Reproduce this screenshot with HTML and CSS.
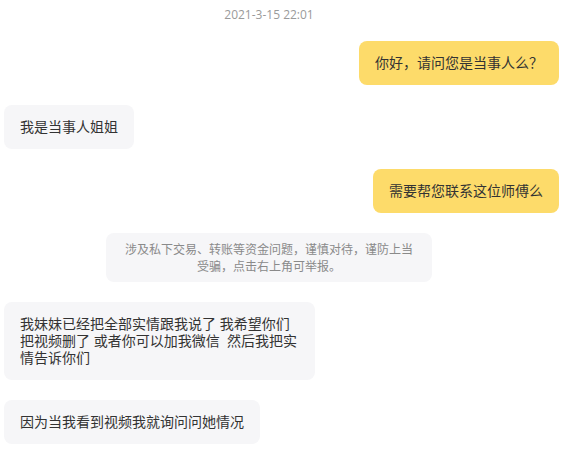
FILE: index.html
```html
<!DOCTYPE html>
<html lang="zh-CN">
<head>
    <meta charset="UTF-8">
    <meta name="viewport" content="width=device-width, initial-scale=1.0">
    <title>聊天记录</title>
    <link rel="stylesheet" href="styles.css">
</head>
<body>
    <div class="chat">
        <div class="time">2021-3-15 22:01</div>

        <div class="msg msg-right">
            <div class="bubble bubble-mine">你好，请问您是当事人么？</div>
        </div>

        <div class="msg msg-left">
            <div class="bubble">我是当事人姐姐</div>
        </div>

        <div class="msg msg-right">
            <div class="bubble bubble-mine">需要帮您联系这位师傅么</div>
        </div>

        <div class="notice-row">
            <div class="notice">涉及私下交易、转账等资金问题，谨慎对待，谨防上当受骗，点击右上角可举报。</div>
        </div>

        <div class="msg msg-left">
            <div class="bubble">我妹妹已经把全部实情跟我说了 我希望你们把视频删了 或者你可以加我微信&nbsp; 然后我把实情告诉你们</div>
        </div>

        <div class="msg msg-left">
            <div class="bubble">因为当我看到视频我就询问问她情况</div>
        </div>
    </div>
</body>
</html>
```

FILE: styles.css
```css
body {
    margin: 0;
    background: #fff;
    font-family: "Open Sans", "Noto Sans CJK SC", sans-serif;
    color: #333;
}
.chat {
    display: flex;
    flex-direction: column;
    gap: 20px;
    padding: 6px 19px 0 4px;
}
.time {
    font-size: 12px;
    line-height: 17px;
    color: #9a9a9a;
    text-align: center;
    padding-right: 25px;
    margin-bottom: -2px;
}
.msg {
    display: flex;
}
.msg-right {
    justify-content: flex-end;
}
.msg-left {
    justify-content: flex-start;
}
.bubble {
    max-width: 311px;
    box-sizing: border-box;
    padding: 13px 16px 14px;
    font-size: 14px;
    line-height: 17px;
    background: #f6f6f8;
    border-radius: 8px;
}
.bubble-mine {
    background: #fddb6a;
}
.notice-row {
    display: flex;
    justify-content: center;
    padding-right: 25px;
}
.notice {
    width: 326px;
    box-sizing: border-box;
    padding: 8px 14px 7px;
    font-size: 12px;
    line-height: 17px;
    color: #8a8a8a;
    text-align: center;
    background: #f6f6f8;
    border-radius: 8px;
}
```
